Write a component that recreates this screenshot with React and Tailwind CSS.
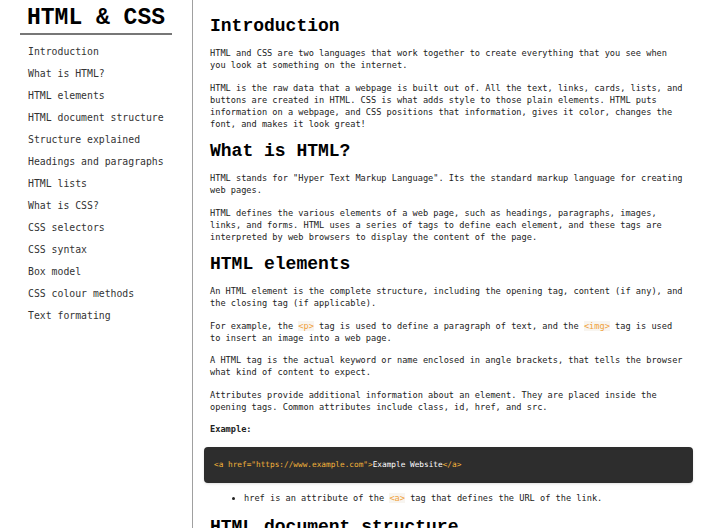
import React from 'react';

const navItems = [
  'Introduction',
  'What is HTML?',
  'HTML elements',
  'HTML document structure',
  'Structure explained',
  'Headings and paragraphs',
  'HTML lists',
  'What is CSS?',
  'CSS selectors',
  'CSS syntax',
  'Box model',
  'CSS colour methods',
  'Text formating',
];

const heading = "font-['Liberation_Mono',monospace] font-bold text-[18px] leading-[22px] text-black mb-[10px]";
const para = 'mb-[10.5px]';

// inline tag names, orange on a faint background
const Tag = ({ children }) => (
  <code className="font-['DejaVu_Sans_Mono',monospace] text-[#f0a23c] bg-[#f8f5f0]">{children}</code>
);

const App = () => {
  return (
    <div className="flex min-h-screen bg-white">
      {/* Sidebar */}
      <aside className="w-[193px] shrink-0 border-r border-[#a0a0a0] flex flex-col">
        <div className="mx-[20px] pt-[7px] pb-[4px] border-b-2 border-[#777] text-center">
          <h1 className="font-['Liberation_Mono',monospace] font-bold text-[23px] leading-[22px] text-black">
            HTML &amp; CSS
          </h1>
        </div>
        <nav className="flex flex-col pl-[28px] pt-[6px] font-['DejaVu_Sans_Mono',monospace] text-[9.8px] text-[#333]">
          {navItems.map(item => (
            <a key={item} href="#" className="h-[22px] leading-[22px] whitespace-nowrap">
              {item}
            </a>
          ))}
        </nav>
      </aside>

      {/* Content */}
      <main className="flex-1 pl-[17px] pr-[25px] pt-[15px] font-['DejaVu_Sans_Mono',monospace] text-[8.65px] leading-[12px] text-[#222]">
        <h2 className={heading}>Introduction</h2>
        <p className={para}>
          HTML and CSS are two languages that work together to create everything that you see when you look at something on the internet.
        </p>
        <p className={para}>
          HTML is the raw data that a webpage is built out of. All the text, links, cards, lists, and buttons are created in HTML. CSS is what adds style to those plain elements. HTML puts information on a webpage, and CSS positions that information, gives it color, changes the font, and makes it look great!
        </p>

        <h2 className={heading}>What is HTML?</h2>
        <p className={para}>
          HTML stands for "Hyper Text Markup Language". Its the standard markup language for creating web pages.
        </p>
        <p className={para}>
          HTML defines the various elements of a web page, such as headings, paragraphs, images, links, and forms. HTML uses a series of tags to define each element, and these tags are interpreted by web browsers to display the content of the page.
        </p>

        <h2 className={heading}>HTML elements</h2>
        <p className={para}>
          An HTML element is the complete structure, including the opening tag, content (if any), and the closing tag (if applicable).
        </p>
        <p className={para}>
          For example, the <Tag>&lt;p&gt;</Tag> tag is used to define a paragraph of text, and the <Tag>&lt;img&gt;</Tag> tag is used to insert an image into a web page.
        </p>
        <p className={para}>
          A HTML tag is the actual keyword or name enclosed in angle brackets, that tells the browser what kind of content to expect.
        </p>
        <p className={para}>
          Attributes provide additional information about an element. They are placed inside the opening tags. Common attributes include class, id, href, and src.
        </p>
        <p className="font-bold mb-[12px]">Example:</p>

        <pre className="-ml-[6px] -mr-[8px] bg-[#2d2d2d] rounded-[4px] px-[10px] py-[12px] font-['DejaVu_Sans_Mono',monospace] text-[7.75px] leading-[12px] shadow-sm">
          <span className="text-[#f2b23a]">&lt;a href="https://www.example.com"&gt;</span>
          <span className="text-white">Example Website</span>
          <span className="text-[#f2b23a]">&lt;/a&gt;</span>
        </pre>

        <ul className="list-disc pl-[34px] mt-[9px] mb-[12px]">
          <li>
            href is an attribute of the <Tag>&lt;a&gt;</Tag> tag that defines the URL of the link.
          </li>
        </ul>

        <h2 className={heading}>HTML document structure</h2>
      </main>
    </div>
  );
};

export default App;
